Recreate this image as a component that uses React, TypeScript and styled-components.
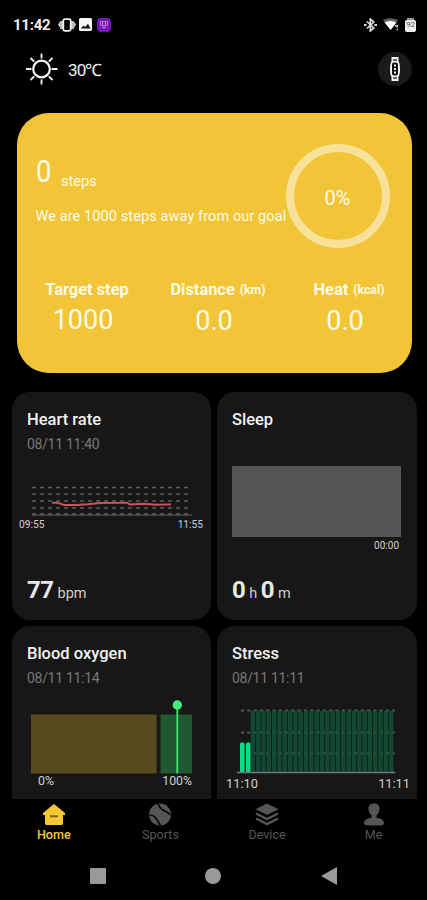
import React from "react";
import styled, { createGlobalStyle } from "styled-components";

const GlobalStyle = createGlobalStyle`
  * { box-sizing: border-box; }
  html, body { margin: 0; background: #000; }
  body { font-family: Roboto, "Liberation Sans", sans-serif; color: #f2f2f2; overflow: hidden; }
  svg { display: block; flex: none; }
`;

const Screen = styled.div`
  width: 427px;
  height: 900px;
  display: flex;
  flex-direction: column;
  background: #000;
  overflow: hidden;
`;

const StatusBar = styled.div`
  height: 49px;
  flex: none;
  display: flex;
  align-items: center;
  justify-content: space-between;
  padding: 0 11px 0 13px;
`;

const StatusGroup = styled.div<{ $gap: number; $inset?: number }>`
  display: flex;
  align-items: center;
  gap: ${(p) => p.$gap}px;
  padding-left: ${(p) => p.$inset ?? 0}px;
`;

const Clock = styled.span`
  width: 42px;
  font-size: 15px;
  font-weight: 700;
  line-height: 20px;
  letter-spacing: -0.25px;
  color: #eee;
`;

const Header = styled.header`
  height: 64px;
  flex: none;
  display: flex;
  align-items: flex-start;
  justify-content: space-between;
  padding: 3px 15px 0 25px;
`;

const Weather = styled.div`
  display: flex;
  align-items: center;
  gap: 10px;
  height: 34px;
`;

const Temperature = styled.span`
  font-size: 17px;
  line-height: 20px;
  letter-spacing: -0.9px;
  padding-top: 2px;
`;

const WatchButton = styled.button`
  width: 34px;
  height: 34px;
  border: 0;
  padding: 0;
  border-radius: 50%;
  background: #1a1a1a;
  display: grid;
  place-items: center;
`;

const Hero = styled.section`
  height: 260px;
  flex: none;
  margin: 0 15.5px 0 16.5px;
  padding: 31px 22px 0 19px;
  border-radius: 32px;
  background: #f1c537;
  color: #fffbe8;
`;

const HeroTop = styled.div`
  display: flex;
  height: 136px;
`;

const Progress = styled.div`
  width: 250px;
  flex: none;
  padding-top: 8px;
`;

const StepLine = styled.div`
  display: flex;
  align-items: baseline;
  gap: 10.5px;
  height: 50px;
`;

const StepCount = styled.span`
  display: inline-block;
  width: 15px;
  font-size: 32px;
  line-height: 38px;
  transform: scaleX(0.86);
  transform-origin: left;
`;

const StepUnit = styled.span`
  font-size: 14.6px;
  position: relative;
  top: 4px;
`;

const GoalText = styled.div`
  margin-top: 5px;
  font-size: 14.5px;
  line-height: 20px;
  letter-spacing: 0.1px;
  white-space: nowrap;
`;

const Ring = styled.div`
  width: 104px;
  height: 104px;
  border-radius: 50%;
  border: 8px solid #f8e198;
  display: grid;
  place-items: center;
  padding-top: 3px;
  font-size: 20px;
  flex: none;
`;

const Totals = styled.div`
  display: grid;
  grid-template-columns: repeat(3, 131px);
  margin-left: -18px;
`;

const Total = styled.div`
  text-align: center;
`;

const TotalLabel = styled.div`
  font-size: 16.4px;
  font-weight: 700;
  line-height: 20px;
  padding-left: 8px;
  white-space: nowrap;
`;

const TotalUnit = styled.span`
  font-size: 12.3px;
  margin-left: 5px;
  position: relative;
  top: -1px;
`;

const TotalValue = styled.div`
  font-size: 27px;
  line-height: 32px;
  margin-top: 4px;
`;

const Cards = styled.main`
  flex: none;
  height: 426px;
  padding: 19px 10px 0 11.5px;
  display: grid;
  grid-template-columns: 199.5px 200px;
  grid-auto-rows: 228px;
  gap: 5.5px;
  overflow: hidden;
`;

const CardBox = styled.section`
  display: flex;
  flex-direction: column;
  padding: 17px 0 0 15.5px;
  border-radius: 18px;
  background: #171717;
`;

const CardTitle = styled.h2`
  margin: 0;
  font-size: 16.5px;
  font-weight: 500;
  line-height: 21px;
`;

const CardDate = styled.div`
  height: 18px;
  margin-top: 5px;
  font-size: 14px;
  line-height: 18px;
  letter-spacing: -0.3px;
  color: #777;
`;

const ChartArea = styled.div<{ $top: number; $left: number; $height: number }>`
  margin: ${(p) => p.$top}px 0 0 ${(p) => p.$left}px;
  height: ${(p) => p.$height}px;
`;

const AxisLabels = styled.div<{ $left: number; $width: number; $size: number; $end?: boolean }>`
  display: flex;
  justify-content: ${(p) => (p.$end ? "flex-end" : "space-between")};
  margin-left: ${(p) => p.$left}px;
  width: ${(p) => p.$width}px;
  font-size: ${(p) => p.$size}px;
  line-height: 16px;
  color: #d0d0d0;
`;

const Reading = styled.div`
  display: flex;
  align-items: baseline;
  margin-top: auto;
  padding-bottom: 11px;
  line-height: 30px;
`;

const ReadingValue = styled.span`
  font-size: 24px;
  font-weight: 700;
  letter-spacing: -0.5px;
  color: #e8e8e8;
`;

const ReadingUnit = styled.span`
  margin: 0 3.5px 0 4px;
  font-size: 14.5px;
  color: #d0d0d0;
`;

const SleepBlock = styled.div`
  width: 169px;
  height: 71px;
  background: #555;
`;

const TabBar = styled.nav`
  flex: none;
  height: 51px;
  display: grid;
  grid-template-columns: repeat(4, 1fr);
  padding: 4px 0 0 0.5px;
`;

const Tab = styled.a<{ $active?: boolean }>`
  display: flex;
  flex-direction: column;
  align-items: center;
  color: ${(p) => (p.$active ? "#f5c736" : "#555")};
  font-size: 12.6px;
  font-weight: ${(p) => (p.$active ? 500 : 400)};
  line-height: 16px;
`;

const SystemNav = styled.div`
  flex: none;
  height: 50px;
  display: flex;
  justify-content: space-between;
  align-items: center;
  padding: 2px 90.5px 0 90px;
`;

const Sun = () => (
  <svg width="33" height="34" viewBox="0 0 33 34" fill="none" stroke="#f4f4f4" strokeWidth="1.8">
    <circle cx="16.5" cy="17" r="8.3" strokeWidth="2.2" />
    <path d="M16.500 1.500v5M16.500 27.500v5M1 17h5.500M26.500 17h6M5.500 6l3.700 3.700M23.800 24.300l3.700 3.700M27.500 6l-3.700 3.700M9.200 24.300L5.500 28" />
  </svg>
);

const Watch = () => (
  <svg width="14" height="26" viewBox="0 0 14 26">
    <path d="M3.500 1h7v4.200q1.500 2 1.500 7.800t-1.500 7.800V25h-7v-4.200q-1.500-2-1.500-7.800t1.500-7.800z" fill="#f3f3f3" />
    <rect x="4" y="6.500" width="6" height="13" rx="2" fill="#111" />
    <path d="M7 8.500v2M7 12v2M7 15.500v2" stroke="#eee" strokeWidth="2" />
    <path d="M5 4h4M5 22h4" stroke="#333" strokeWidth="1.400" />
  </svg>
);

const Vibrate = () => (
  <svg width="18" height="14" viewBox="0 0 18 14">
    <path d="M0 6.500L2.500 3V10.500zM18 6.500L15.500 3V10.500z" fill="#ccc" />
    <path d="M2 3h3v8H2zM13 3h3v8h-3z" fill="#bbb" />
    <rect x="5.300" y="1.200" width="7.400" height="11.600" rx="1.500" fill="#000" stroke="#eee" strokeWidth="1.800" />
  </svg>
);

const Gallery = () => (
  <svg width="13" height="13" viewBox="0 0 13 13">
    <rect width="13" height="13" rx="1.500" fill="#f6f6f6" />
    <path d="M1.800 10.500L4.500 7.500l1.700 1.500L9 5.800l2.500 4.700z" fill="#111" />
  </svg>
);

const PurpleApp = () => (
  <svg width="14" height="14" viewBox="0 0 14 14">
    <rect width="14" height="14" rx="4" fill="#7516b5" />
    <path d="M3.500 3.500h7v4h-7zM7 7.500V11M5 9.500h4M5.500 4v3M8.500 4v3" stroke="#b670dc" strokeWidth="1" fill="none" />
  </svg>
);

const Bluetooth = () => (
  <svg width="13" height="14" viewBox="0 0 13 14" fill="none" stroke="#ddd" strokeWidth="1.700">
    <path d="M2.800 3.500l7 6.500-3.500 3V1l3.500 3-7 6.500" />
    <path d="M0 7h2.500M10.500 7H13" strokeWidth="2" />
  </svg>
);

const Wifi = () => (
  <svg width="16" height="13" viewBox="0 0 16 13">
    <path d="M0 2Q7.500-1.300 15 2l-1.500 2.200h-12z" fill="#666" />
    <path d="M1.500 4.500Q7.500 1.500 13.500 4.500L7.700 12z" fill="#fff" />
    <path d="M11.500 7H15v5h-3z" fill="#000" />
    <path d="M12 7.700h2.300v1.800M14.300 10.700v1.500" stroke="#ccc" strokeWidth="1.500" fill="none" />
  </svg>
);

const BatteryBody = styled.div`
  width: 11px;
  height: 12px;
  margin-top: 2px;
  border-radius: 2px;
  background: #eee;
  color: #555;
  font-size: 8px;
  line-height: 9px;
  text-align: center;
  letter-spacing: -0.2px;
  box-shadow: 0 -4px 0 -2px #999;
`;

const HeartChart = () => (
  <svg width="162" height="31" viewBox="0 0 162 31" fill="none">
    <path
      d="M0 1.500H160M0 8H160M0 15H160M0 22H160M0 28H160"
      stroke="#5c5c5c"
      strokeWidth="1.300"
      strokeDasharray="4 4"
    />
    <path d="M0 29H160" stroke="#666" />
    <path
      d="M20 16.700l6 .2 6 2.100 12 0 12-.8 12-1.200 16-.1 11-.1 3 1.700 13-.7 7 .4 5 .6 16-.4"
      stroke="#cf5358"
      strokeWidth="1.900"
    />
  </svg>
);

const OxygenChart = () => (
  <svg width="162" height="74" viewBox="0 0 162 74">
    <rect x="0" y="14.500" width="125.500" height="59" fill="#574a1e" />
    <rect x="129.500" y="14.500" width="31.500" height="59" fill="#205832" />
    <path d="M146.300 5v68.500" stroke="#42e66d" strokeWidth="1.800" />
    <circle cx="146.300" cy="5" r="4.700" fill="#42f078" />
  </svg>
);

const StressChart = () => (
  <svg width="160" height="65" viewBox="0 0 160 65">
    <path d="M4 1.500H158M4 23.500H158M4 44.500H158" stroke="#555" strokeWidth="1.800" strokeDasharray="3 3.300" />
    {[3, 9].map((x) => (
      <rect key={x} x={x} y="33.500" width="4.600" height="30" rx="1.500" fill="#0ddb86" />
    ))}
    {Array.from({ length: 27 }, (_, i) => (
      <rect key={i} x={13.7 + i * 5.32} y="1.500" width="4.400" height="62" rx="1.500" fill="#104832" />
    ))}
    <path d="M16.600 1.500H158" stroke="#3d5148" strokeWidth="1.600" strokeDasharray="3 3.300" />
    <path d="M16.600 23.500H158M16.600 44.500H158" stroke="#28573f" strokeWidth="1.600" strokeDasharray="3 3.300" />
    <path d="M0 63.500H158" stroke="#777" strokeWidth="1.400" />
  </svg>
);

const HomeIcon = () => (
  <svg width="24" height="24" viewBox="0 0 24 24">
    <path d="M12 1L1 10v2h2v8.500Q3 22 4.500 22h15q1.500 0 1.500-1.500V12h2v-2z" fill="currentColor" />
    <path d="M8 13.300h8" stroke="#806413" strokeWidth="2" />
  </svg>
);

const SportsIcon = () => (
  <svg width="24" height="24" viewBox="0 0 24 24" fill="none">
    <circle cx="12" cy="11.500" r="11" fill="currentColor" />
    <path d="M10 .5q1.500 5 6 7t6.500 4.500M1.500 12q4 0 6.500 3.500t4.500 7" stroke="#050505" strokeWidth="1.600" />
  </svg>
);

const DeviceIcon = () => (
  <svg width="24" height="24" viewBox="0 0 24 24" fill="none" stroke="currentColor" strokeWidth="2.500">
    <path d="M12 .5l11.500 5.700L12 12 .5 6.200z" fill="currentColor" stroke="none" />
    <path d="M1 10.500l11 5.500 11-5.500M1 15.500L12 21l11-5.500" />
  </svg>
);

const MeIcon = () => (
  <svg width="24" height="24" viewBox="0 0 24 24" fill="currentColor">
    <path d="M12 .5c4 0 6 2.700 5.500 6.200-.3 2.600-1.500 4.300-3 5.500v2.300c4 1.200 7.300 2 7.500 5.300.1 1.700-1.500 2.700-3.500 2.700h-13c-2 0-3.500-1-3.500-2.700.2-3.300 3.500-4.100 7.500-5.300v-2.300c-1.500-1.200-2.700-2.900-3-5.500C6 3.200 8 .5 12 .5z" />
  </svg>
);

const tabs = [
  { label: "Home", Icon: HomeIcon },
  { label: "Sports", Icon: SportsIcon },
  { label: "Device", Icon: DeviceIcon },
  { label: "Me", Icon: MeIcon },
];

const totals = [
  { label: "Target step", unit: "", value: "1000" },
  { label: "Distance", unit: "(km)", value: "0.0" },
  { label: "Heat", unit: "(kcal)", value: "0.0" },
];

function Card({ title, date, children }: { title: string; date?: string; children: React.ReactNode }) {
  return (
    <CardBox>
      <CardTitle>{title}</CardTitle>
      <CardDate>{date}</CardDate>
      {children}
    </CardBox>
  );
}

export default function App() {
  return (
    <>
      <GlobalStyle />
      <Screen>
        <StatusBar>
          <StatusGroup $gap={3}>
            <Clock>11:42</Clock>
            <Vibrate />
            <Gallery />
            <StatusGroup $gap={0} $inset={2}>
              <PurpleApp />
            </StatusGroup>
          </StatusGroup>
          <StatusGroup $gap={6}>
            <Bluetooth />
            <Wifi />
            <BatteryBody>92</BatteryBody>
          </StatusGroup>
        </StatusBar>
        <Header>
          <Weather>
            <Sun />
            <Temperature>30℃</Temperature>
          </Weather>
          <WatchButton aria-label="Device">
            <Watch />
          </WatchButton>
        </Header>
        <Hero>
          <HeroTop>
            <Progress>
              <StepLine>
                <StepCount>0</StepCount>
                <StepUnit>steps</StepUnit>
              </StepLine>
              <GoalText>We are 1000 steps away from our goal</GoalText>
            </Progress>
            <Ring>0%</Ring>
          </HeroTop>
          <Totals>
            {totals.map((t) => (
              <Total key={t.label}>
                <TotalLabel>
                  {t.label}
                  {t.unit && <TotalUnit>{t.unit}</TotalUnit>}
                </TotalLabel>
                <TotalValue>{t.value}</TotalValue>
              </Total>
            ))}
          </Totals>
        </Hero>
        <Cards>
          <Card title="Heart rate" date="08/11 11:40">
            <ChartArea $top={33} $left={5} $height={31}>
              <HeartChart />
            </ChartArea>
            <AxisLabels $left={-8} $width={184} $size={10.2}>
              <span>09:55</span>
              <span>11:55</span>
            </AxisLabels>
            <Reading>
              <ReadingValue>77</ReadingValue>
              <ReadingUnit>bpm</ReadingUnit>
            </Reading>
          </Card>
          <Card title="Sleep">
            <ChartArea $top={13} $left={0} $height={71.5}>
              <SleepBlock />
            </ChartArea>
            <AxisLabels $left={0} $width={167} $size={10} $end>
              <span>00:00</span>
            </AxisLabels>
            <Reading>
              <ReadingValue>0</ReadingValue>
              <ReadingUnit>h</ReadingUnit>
              <ReadingValue>0</ReadingValue>
              <ReadingUnit>m</ReadingUnit>
            </Reading>
          </Card>
          <Card title="Blood oxygen" date="08/11 11:14">
            <ChartArea $top={13} $left={4} $height={73}>
              <OxygenChart />
            </ChartArea>
            <AxisLabels $left={11} $width={154} $size={12.3}>
              <span>0%</span>
              <span>100%</span>
            </AxisLabels>
          </Card>
          <Card title="Stress" date="08/11 11:11">
            <ChartArea $top={22} $left={5} $height={67}>
              <StressChart />
            </ChartArea>
            <AxisLabels $left={-6} $width={184} $size={12.8}>
              <span>11:10</span>
              <span>11:11</span>
            </AxisLabels>
          </Card>
        </Cards>
        <TabBar>
          {tabs.map(({ label, Icon }) => (
            <Tab key={label} $active={label === "Home"}>
              <Icon />
              {label}
            </Tab>
          ))}
        </TabBar>
        <SystemNav>
          <svg width="16" height="16"><rect width="16" height="16" rx="1" fill="#999" /></svg>
          <svg width="16" height="16"><circle cx="8" cy="8" r="8" fill="#999" /></svg>
          <svg width="16" height="18"><path d="M16 0v18L0 9z" fill="#999" /></svg>
        </SystemNav>
      </Screen>
    </>
  );
}
